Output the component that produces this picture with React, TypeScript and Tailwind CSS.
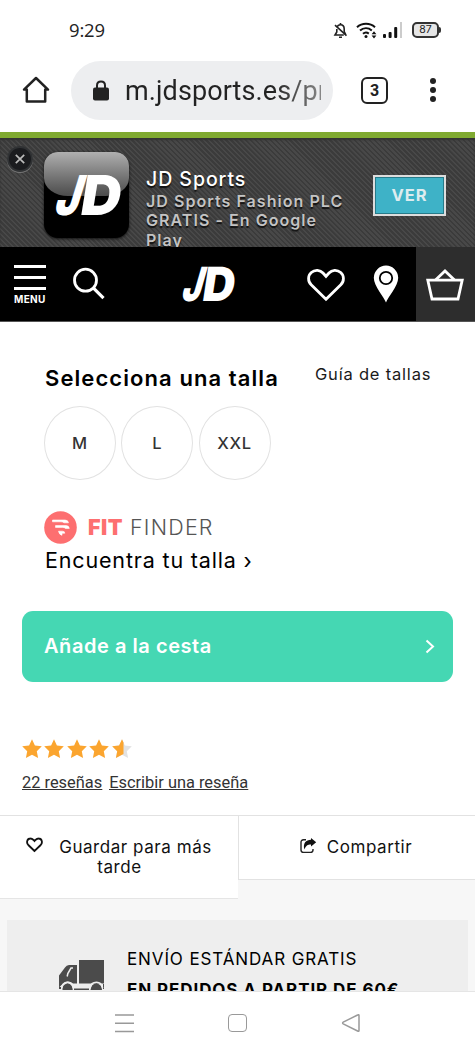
import type { ReactNode } from 'react';

const sizes = ['M', 'L', 'XXL'];
const stars = [1, 1, 1, 1, 0.5];

const STAR_PATH =
  'M10 0.2 L12.9 6.4 L19.8 7.3 L14.8 12.2 L16.1 19.1 L10 15.8 L3.9 19.1 L5.2 12.2 L0.2 7.3 L7.1 6.4 Z';

function JDMark({ className }: { className?: string }) {
  return (
    <svg viewBox="0 0 64 42" className={className} preserveAspectRatio="none" overflow="visible">
      <g fill="#fff" fontFamily="Inter, sans-serif" fontWeight="900" fontSize="55">
        <text x="-2.5" y="0" textLength="24" lengthAdjust="spacingAndGlyphs" transform="translate(0 41) skewX(-17)">
          J
        </text>
        <text x="23.5" y="0" textLength="39.5" lengthAdjust="spacingAndGlyphs" transform="translate(0 41) skewX(-9)">
          D
        </text>
      </g>
    </svg>
  );
}

function StatusBar() {
  return (
    <div className="flex h-[60px] shrink-0 items-center pl-[69px] pr-[34px]">
      <span className="font-['Open_Sans',sans-serif] text-[18.5px] leading-none tracking-[-0.2px] text-[#222]">
        9:29
      </span>
      <div className="ml-auto flex items-center">
        {/* muted bell */}
        <svg className="mr-[8px] h-[17px] w-[15px]" viewBox="0 0 15 17" fill="none" stroke="#222" strokeWidth="1.6">
          <path d="M4 5.2 C4.6 3.4 6 2.7 7.5 2.7 C9.9 2.7 11.2 4.7 11.2 7 V9.5 L12.6 12.4 M10.8 13 H2 L3.8 10 V7" />
          <path d="M7.5 1 V2.7 M6 15.2 H9 M2 3.2 L13.5 13.7" />
        </svg>
        {/* wifi */}
        <svg className="mr-[6px] h-[17px] w-[21px]" viewBox="0 0 21 17" fill="none" stroke="#111" strokeWidth="2">
          <path d="M1 5.2 C6 0.6 14 0.6 19 5.2" />
          <path d="M4 8.6 C7.5 5.4 12.3 5.4 15.8 8.4" />
          <path d="M7 11.8 C8.6 10.4 11 10.3 12.8 11.6" />
          <circle cx="10" cy="14.6" r="1.5" fill="#111" stroke="none" />
          <path d="M15.6 12.2 L18 9.2 L20.4 12.2 Z M15.6 13.4 L18 16.4 L20.4 13.4 Z" fill="#111" stroke="none" />
        </svg>
        {/* signal */}
        <svg className="mr-[9px] h-[16px] w-[20px]" viewBox="0 0 20 16">
          <rect x="0" y="12" width="3" height="4" rx="1" fill="#111" />
          <rect x="5.6" y="10" width="3" height="6" rx="1" fill="#111" />
          <rect x="11.2" y="5" width="3" height="11" rx="1" fill="#111" />
          <rect x="17" y="0" width="2" height="16" fill="#ccc" />
        </svg>
        <div className="flex h-[16px] w-[27px] items-center justify-center rounded-[5px] border-2 border-[#333] bg-[#e6e6e6] font-['Inter',sans-serif] text-[10.5px] leading-none text-[#222]">
          87
        </div>
        <div className="h-[6px] w-[2px] rounded-r bg-[#333]" />
      </div>
    </div>
  );
}

function BrowserBar() {
  return (
    <div className="flex h-[72px] shrink-0 items-start">
      <svg className="ml-[22px] mt-[16px] h-[28px] w-[28px]" viewBox="0 0 28 28" fill="none" stroke="#222" strokeWidth="2.5" strokeLinejoin="round" strokeLinecap="round">
        <path d="M14 2 L26 13.6 H23.2 V25.6 H4.8 V13.6 H2 Z" />
      </svg>
      <div className="ml-[21px] mt-px flex h-[59px] w-[262px] items-center rounded-full bg-[#edeef0] pl-[22px]">
        <svg className="h-[22px] w-[16px] shrink-0" viewBox="0 0 16 22">
          <path d="M4 9 V5.4 C4 0.2 12 0.2 12 5.4 V9" fill="none" stroke="#222" strokeWidth="2" />
          <rect x="0" y="7.5" width="16" height="13" rx="2" fill="#222" />
        </svg>
        <div className="ml-[16px] w-[196px] overflow-hidden whitespace-nowrap bg-linear-to-r from-[#222] from-75% to-[#888] bg-clip-text font-['Roboto',sans-serif] text-[27px] leading-[36px] tracking-[0.1px] text-transparent">
          m.jdsports.es/pr
        </div>
      </div>
      <div className="ml-[28px] mt-[17px] flex h-[27px] w-[27px] items-center justify-center rounded-[6px] border-[2.5px] border-[#222] font-['Roboto',sans-serif] text-[16px] font-bold leading-none text-[#222]">
        3
      </div>
      <div className="ml-[42px] mt-[18px] flex flex-col gap-[3px]">
        <i className="h-[6px] w-[6px] rounded-full bg-[#222]" />
        <i className="h-[6px] w-[6px] rounded-full bg-[#222]" />
        <i className="h-[6px] w-[6px] rounded-full bg-[#222]" />
      </div>
    </div>
  );
}

function AppBanner() {
  return (
    <div className="flex h-[115px] shrink-0 items-start overflow-hidden border-t-[6px] border-[#80aa31] bg-[repeating-linear-gradient(45deg,#3b3b3b_0px,#3b3b3b_1.7px,#484848_1.9px,#484848_3.5px)] shadow-[inset_0_2px_2px_#333]">
      <div className="ml-[7px] mt-[8px] flex h-[26px] w-[26px] items-center justify-center rounded-full border-2 border-[#303234] bg-[#1b1c1f] shadow-[0_1px_0_#777]">
        <svg className="h-[10px] w-[10px]" viewBox="0 0 10 10" stroke="#bbb" strokeWidth="1.7">
          <path d="M0.8 0.8 L9.2 9.2 M9.2 0.8 L0.8 9.2" />
        </svg>
      </div>
      <div className="ml-[11px] mt-[14px] h-[86px] w-[85px] overflow-hidden rounded-[14px] bg-black shadow-[0_1px_3px_#111]">
        <div className="h-[44px] w-full rounded-b-[24px_18px] bg-linear-to-b from-[#b0b0b0] to-[#4c4c4c]" />
        <JDMark className="-mt-[22px] ml-[11px] h-[42px] w-[65px]" />
      </div>
      <div className="ml-[17px] mt-[29px] w-[210px] font-['Inter',sans-serif] [text-shadow:0_2px_1px_#111]">
        <div className="text-[19.5px] font-medium leading-[24px] tracking-[0.95px] text-white">JD Sports</div>
        <div className="mt-px whitespace-nowrap text-[16px] font-semibold leading-[19.3px] tracking-[1.05px] text-[#c3c3c3]">
          JD Sports Fashion PLC
          <br />
          GRATIS - En Google
          <br />
          Play
        </div>
      </div>
      <button className="ml-[17px] mt-[37px] flex h-[41px] w-[73px] items-center justify-center border-2 border-[#ddd] bg-[#3eb2c7] font-['Inter',sans-serif] text-[16.5px] font-bold tracking-[1px] text-[#ddecef] shadow-[inset_0_0_0_1px_#277b8a]">
        VER
      </button>
    </div>
  );
}

function NavBar() {
  return (
    <div className="flex h-[75px] shrink-0 items-start border-b border-[#555] bg-black">
      <div className="ml-[14px] mt-[18px] flex w-[32px] flex-col">
        <i className="h-[3px] bg-white" />
        <i className="mt-[8px] h-[3px] bg-white" />
        <i className="mt-[8px] h-[3px] bg-white" />
        <span className="mt-[4px] font-['Inter',sans-serif] text-[10px] font-bold leading-[10px] tracking-[0.35px] text-white">
          MENU
        </span>
      </div>
      <svg className="ml-[26px] mt-[20px] h-[34px] w-[34px]" viewBox="0 0 34 34" fill="none" stroke="#fff" strokeWidth="2.8">
        <circle cx="13.5" cy="13.2" r="11" />
        <path d="M21.5 21.2 L31.5 31.2" strokeWidth="3.2" />
      </svg>
      <JDMark className="ml-[76px] mt-[19px] h-[36px] w-[52px]" />
      <svg className="ml-[73px] mt-[21px] h-[34px] w-[38px]" viewBox="0 0 38 34" fill="none" stroke="#fff" strokeWidth="2.8">
        <path d="M19 31.2 L4.2 16.8 C0.6 13.2 0.8 7.5 4.3 4.5 C8 1.2 13.2 1.8 16 5 L19 8.3 L22 5 C24.8 1.8 30 1.2 33.7 4.5 C37.2 7.5 37.4 13.2 33.8 16.8 Z" />
      </svg>
      <svg className="ml-[28px] mt-[18px] h-[38px] w-[26px]" viewBox="0 0 26 38">
        <path d="M13 37.5 C11.5 33 0.8 21 0.8 12.8 A12.2 12.2 0 0 1 25.2 12.8 C25.2 21 14.5 33 13 37.5 Z" fill="#fff" />
        <circle cx="13" cy="13" r="6.2" fill="#fff" stroke="#000" strokeWidth="1.8" />
      </svg>
      <div className="ml-auto flex h-[74px] w-[59px] justify-center bg-[#2d2d2d]">
        <svg className="-ml-[2px] mt-[21px] h-[34px] w-[38px]" viewBox="0 0 38 34" fill="none" stroke="#fff" strokeWidth="2.8">
          <path d="M1.8 12.2 H36.2 L32 31 H6 Z" />
          <path d="M9.5 12 L19 3 L28.5 12" />
        </svg>
      </div>
    </div>
  );
}

function SizePicker() {
  return (
    <section className="shrink-0 pl-[45px] font-['Inter',sans-serif]">
      <div className="flex h-[84px] items-start pt-[40px] text-black">
        <h2 className="w-[270px] whitespace-nowrap text-[22px] font-semibold leading-[32px] tracking-[1.08px]">
          Selecciona una talla
        </h2>
        <a className="text-[16.5px] leading-[25px] tracking-[0.8px] text-[#1a1a1a]">Guía de tallas</a>
      </div>
      <div className="-ml-px flex gap-[5.3px]">
        {sizes.map((size) => (
          <button
            key={size}
            className="flex h-[74px] w-[72px] items-center justify-center rounded-[50%] border border-[#e2e2e2] text-[16.5px] font-medium tracking-[0.7px] text-[#333]"
          >
            {size}
          </button>
        ))}
      </div>
      <div className="mt-[31px] flex h-[33px] items-center text-[21.5px] leading-none">
        <svg className="-ml-px h-[33px] w-[33px]" viewBox="0 0 33 33">
          <circle cx="16.5" cy="16.5" r="16.3" fill="#fd6f70" />
          <path
            d="M8.5 9 H21 Q24 9 24.5 11.8 H20 Q18.8 10.8 17 10.8 H8.5 Z M11.5 14.6 H22 Q25 14.6 25.3 17.4 H21.5 Q20.5 16.4 18.5 16.4 H11.5 Z M14.5 20.2 H18.5 Q20.8 20.2 20.8 22.2 H18 V24.3 Q15.2 23.8 14.5 20.2 Z"
            fill="#fff"
            stroke="#fff"
            strokeWidth="0.6"
            strokeLinejoin="round"
          />
        </svg>
        <b className="ml-[11px] w-[42px] font-black tracking-[0.5px] text-[#fd6f70]">FIT</b>
        <span className="font-light tracking-[1.2px] text-[#555]">FINDER</span>
      </div>
      <a className="mt-px block text-[21.5px] leading-[30px] tracking-[0.84px] text-black">Encuentra tu talla ›</a>
    </section>
  );
}

function Reviews() {
  return (
    <div className="ml-[22px] mt-[57px] shrink-0 font-['Roboto',sans-serif]">
      <div className="flex h-[20px] gap-[2.4px]">
        {stars.map((fill, i) => (
          <svg key={i} className="h-[20px] w-[20px]" viewBox="0 0 20 20">
            <path d={STAR_PATH} fill={fill < 1 ? '#e2e2e2' : '#fba52f'} />
            {fill < 1 && <path d="M10 0.2 L7.1 6.4 L0.2 7.3 L5.2 12.2 L3.9 19.1 L11.5 15 V3.4 Z" fill="#fba52f" />}
          </svg>
        ))}
      </div>
      <div className="mt-[14px] flex gap-[7px] whitespace-nowrap text-[16.4px] leading-[20px] text-[#333] underline">
        <a>22 reseñas</a>
        <a>Escribir una reseña</a>
      </div>
    </div>
  );
}

function Action({ icon, children }: { icon: ReactNode; children: ReactNode }) {
  return (
    <div className="flex items-start justify-center pt-[21px] text-center text-[17px] leading-[20px] tracking-[0.55px] text-[#111]">
      {icon}
      <span>{children}</span>
    </div>
  );
}

function ProductActions() {
  return (
    <div className="mt-[22px] flex grow flex-col border-t border-[#e2e2e2] bg-[#f7f7f7] font-['Inter',sans-serif]">
      <div className="flex shrink-0 items-start">
        <div className="h-[83px] w-[238px] border-b border-[#e5e5e5] bg-white">
          <Action
            icon={
              <svg className="mr-[16px] h-[16px] w-[17px]" viewBox="0 0 17 16" fill="none" stroke="#111" strokeWidth="1.8">
                <path d="M8.5 14 L2.3 8 C0.2 5.8 0.8 1.6 4.5 1.5 C6.5 1.4 7.4 2.7 8.5 4 C9.6 2.7 10.5 1.4 12.5 1.5 C16.2 1.6 16.8 5.8 14.7 8 Z" />
              </svg>
            }
          >
            Guardar para más
            <br />
            <span className="-ml-[32px]">tarde</span>
          </Action>
        </div>
        <div className="h-[64px] grow border-b border-l border-[#e2e2e2] bg-white">
          <Action
            icon={
              <svg className="-ml-[2px] mr-[10px] mt-px h-[16px] w-[17px]" viewBox="0 0 17 16">
                <path d="M6 1.8 H3.5 Q1 1.8 1 4.2 V12 Q1 14.4 3.5 14.4 H10.5 Q13 14.4 13 12 V11" fill="none" stroke="#222" strokeWidth="1.4" />
                <path d="M11 0 L16.2 4.2 L11 8.4 V6.4 C7.5 6.4 6 7.5 4.4 11.5 C2.6 5.4 6 1.9 11 1.8 Z" fill="#111" />
              </svg>
            }
          >
            Compartir
          </Action>
        </div>
      </div>
      <div className="ml-[7px] mt-[21px] flex h-[71px] w-[461px] shrink-0 items-start overflow-hidden bg-[#eee]">
        <svg className="ml-[52px] mt-[40px] h-[31px] w-[46px]" viewBox="0 0 46 31">
          <path d="M20 0 H45 V23.5 H20 Z M18 5 V23.5 H14 Q8.5 19.5 3.5 24 L0 27.5 V15.5 L6 7.5 Q7.5 5 10 5 Z" fill="#4b4b4b" />
          <path d="M8.2 16.5 L8.8 13.5 L12 8 H14" fill="none" stroke="#eee" strokeWidth="1.5" />
          <path
            d="M3.5 30 Q3 24.5 8.5 23.2 Q13.5 24 13.8 30 Z M31.5 30 Q32 24 37.5 23.2 Q43 24.5 43 30 Z M15 28.5 H30 V30 H15 Z M0 27 H2 V29 H0 Z M44 24 H45 V29 H44 Z"
            fill="#4b4b4b"
          />
          <path d="M2.8 28 Q3.5 22.2 8.5 22.2 Q13.5 22.2 14.4 28 M31 28 Q32 22.2 37.5 22.2 Q42.5 22.2 43.6 28" fill="none" stroke="#eee" strokeWidth="1.6" />
        </svg>
        <div className="ml-[22px] mt-[24px] whitespace-nowrap text-black">
          <div className="text-[17px] leading-[30px] tracking-[0.88px]">ENVÍO ESTÁNDAR GRATIS</div>
          <div className="mt-px text-[17px] font-bold leading-[30px] tracking-[0.92px]">EN PEDIDOS A PARTIR DE 60€</div>
        </div>
      </div>
    </div>
  );
}

function SystemNav() {
  return (
    <div className="flex h-[65px] shrink-0 items-start border-t border-[#e5e5e5] bg-white pt-[21px]">
      <svg className="ml-[115px] h-[20px] w-[19px]" viewBox="0 0 19 20" stroke="#999" strokeWidth="1.5">
        <path d="M0 2 H19 M0 10.2 H19 M0 18.4 H19" />
      </svg>
      <div className="ml-[94px] mt-px h-[18px] w-[19px] rounded-[4px] border-[1.5px] border-[#999]" />
      <svg className="ml-[94px] h-[20px] w-[20px]" viewBox="0 0 20 20" fill="none" stroke="#999" strokeWidth="1.5" strokeLinejoin="round">
        <path d="M18 2.6 V17.4 Q18 18.8 16.6 18 L2.2 10.8 Q1 10 2.2 9.2 L16.6 2 Q18 1.2 18 2.6 Z" />
      </svg>
    </div>
  );
}

export default function App() {
  return (
    <div className="flex h-[1056px] w-[475px] flex-col overflow-hidden bg-white">
      <StatusBar />
      <BrowserBar />
      <AppBanner />
      <NavBar />
      <main className="flex min-h-0 grow flex-col overflow-hidden">
        <SizePicker />
        <button className="ml-[22px] mt-[36px] flex h-[71px] w-[431px] shrink-0 items-center justify-between rounded-[11px] bg-[#45d7b3] pb-[2px] pl-[22px] pr-[18px] font-['Inter',sans-serif] text-[20px] font-semibold tracking-[0.55px] text-white">
          Añade a la cesta
          <svg className="mt-[2px] h-[15px] w-[10px]" viewBox="0 0 10 15" fill="none" stroke="#fff" strokeWidth="2">
            <path d="M1.5 1.5 L8 7.5 L1.5 13.5" />
          </svg>
        </button>
        <Reviews />
        <ProductActions />
      </main>
      <SystemNav />
    </div>
  );
}
